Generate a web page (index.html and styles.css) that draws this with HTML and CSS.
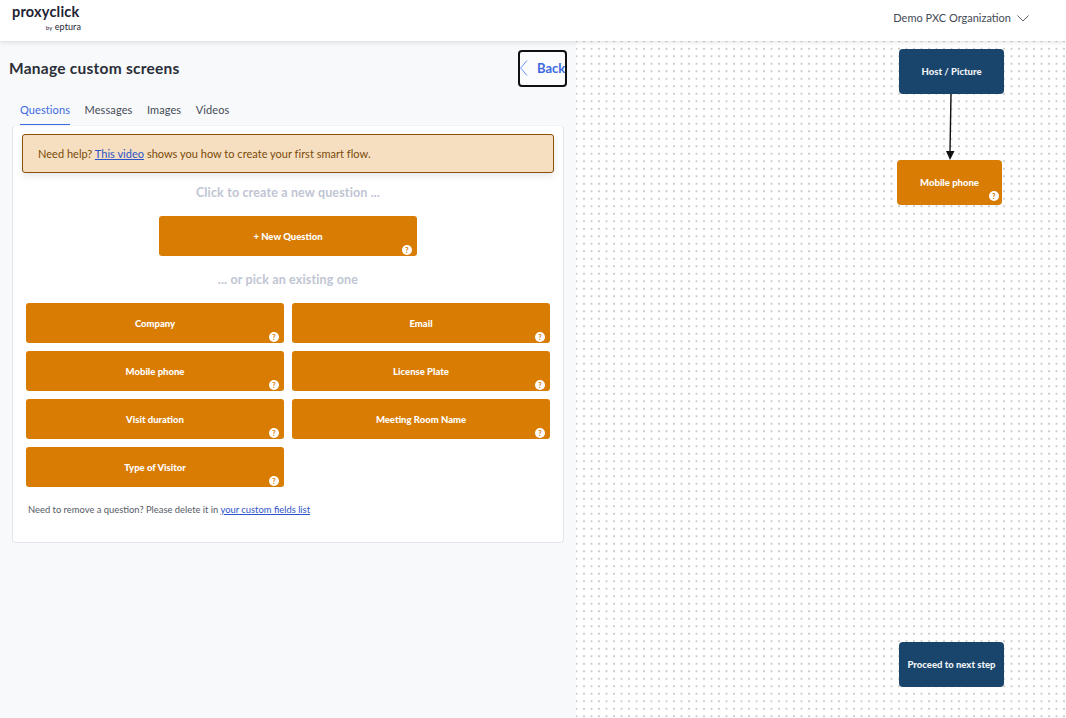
FILE: index.html
```html
<!DOCTYPE html>
<html lang="en">
<head>
<meta charset="utf-8">
<title>Manage custom screens</title>
<link rel="stylesheet" href="styles.css">
</head>
<body>
<header class="topbar">
  <div class="logo">
    <div class="logo-main">proxyclick</div>
    <div class="logo-sub"><span class="logo-by">by</span> eptura</div>
  </div>
  <div class="org">
    <span>Demo PXC Organization</span>
    <svg class="org-chevron" width="12" height="7" viewBox="0 0 12 7"><path d="M.5.5 6 6 11.5.5" fill="none" stroke="#5b616c" stroke-width="1"/></svg>
  </div>
</header>
<main class="layout">
  <section class="panel">
    <div class="panel-head">
      <h1>Manage custom screens</h1>
      <button class="back">
        <svg width="8" height="16" viewBox="0 0 8 16"><path d="M7 .5 .7 8 7 15.500" fill="none" stroke="#6f94f2" stroke-width="1"/></svg>
        <span>Back</span>
      </button>
    </div>
    <nav class="tabs">
      <a class="tab active">Questions</a>
      <a class="tab">Messages</a>
      <a class="tab">Images</a>
      <a class="tab">Videos</a>
    </nav>
    <div class="card">
      <div class="notice">Need help? <a href="#">This video</a> shows you how to create your first smart flow.</div>
      <p class="hint hint-first">Click to create a new question ...</p>
      <div class="new-row">
        <div class="tile new">+ New Question<i class="help">?</i></div>
      </div>
      <p class="hint hint-second">... or pick an existing one</p>
      <div class="grid">
        <div class="tile">Company<i class="help">?</i></div>
        <div class="tile">Email<i class="help">?</i></div>
        <div class="tile">Mobile phone<i class="help">?</i></div>
        <div class="tile">License Plate<i class="help">?</i></div>
        <div class="tile">Visit duration<i class="help">?</i></div>
        <div class="tile">Meeting Room Name<i class="help">?</i></div>
        <div class="tile">Type of Visitor<i class="help">?</i></div>
      </div>
      <p class="remove">Need to remove a question? Please delete it in <a href="#">your custom fields list</a></p>
    </div>
  </section>
  <section class="canvas">
    <svg class="edge" width="12" height="67" viewBox="0 0 12 67"><path d="M7 0 6 58" stroke="#111" stroke-width="1.4" fill="none"/><path d="M2 57h8.500L6 66z" fill="#111"/></svg>
    <div class="node node-host">Host / Picture</div>
    <div class="node node-mobile">Mobile phone<i class="help help-node">?</i></div>
    <div class="node node-next">Proceed to next step</div>
  </section>
</main>
</body>
</html>
```
FILE: styles.css
```css
* { box-sizing: border-box; }
html, body { margin: 0; height: 100%; }
body {
  width: 1066px; height: 718px; overflow: hidden;
  font-family: "Lato", "Liberation Sans", sans-serif;
  color: #2b2f38; background: #fff;
  display: flex; flex-direction: column;
}
.topbar {
  height: 41px; flex: none; background: #fff;
  display: flex; align-items: flex-start; justify-content: space-between;
  box-shadow: 0 1px 5px rgba(40,50,70,.16);
  position: relative; z-index: 2;
}
.logo { margin: 4px 0 0 12px; width: 69px; color: #1d2333; }
.logo-main { font-size: 14.5px; line-height: 16px; font-weight: 700; letter-spacing: .2px; }
.logo-sub { font-size: 9px; line-height: 9px; text-align: right; font-weight: 400; margin-top: 2px; letter-spacing: .1px; }
.logo-by { font-size: 6px; }
.org { display: flex; align-items: center; gap: 6px; margin: 10px 37px 0 0; font-size: 11px; line-height: 15px; color: #444a55; }
.org-chevron { margin-top: 1px; }
.layout { flex: 1; display: flex; min-height: 0; }
.panel { width: 576px; flex: none; background: #f8f9fb; padding: 9px 9px 0 9px; }
.panel-head { display: flex; justify-content: space-between; align-items: center; height: 37px; }
h1 { margin: -2px 0 0; font-size: 15.5px; font-weight: 700; color: #2b2f38; letter-spacing: .25px; }
.back {
  width: 49px; height: 37px; padding: 0 0 2px 0; background: #fbfcfe;
  border: 2px solid #111; border-radius: 4px;
  display: flex; align-items: center; gap: 9px; overflow: hidden;
  font: 700 13px "Lato", sans-serif; color: #3d6ae0; white-space: nowrap;
}
.back svg { flex: none; }
.tabs { display: flex; gap: 14.5px; margin: 15px 0 0 11px; height: 23px; font-size: 11px; letter-spacing: .1px; }
.tab { color: #454b57; line-height: 15px; }
.tab.active { color: #3d6ae0; height: 23px; border-bottom: 1px solid #3d6ae0; }
.card {
  width: 552px; margin: 0 0 0 3px; height: 418px;
  background: #fff; border: 1px solid #e3e6ec; border-top-color: #f1f2f5; border-radius: 4px;
  padding: 8px 9px 0 9px;
}
.notice {
  height: 39px; background: #f5dfc0; border: 1px solid #8a5209; border-radius: 3px;
  color: #7b4a0a; font-size: 11px; line-height: 37px; padding-left: 15px;
  box-shadow: 0 3px 7px rgba(60,60,80,.12); letter-spacing: .02px;
}
.notice a { color: #2f53c9; }
.hint { margin: 0; text-align: center; color: #c0c5d3; font-size: 12.5px; font-weight: 700; line-height: 16px; letter-spacing: .15px; }
.hint-first { margin-top: 12px; }
.hint-second { margin-top: 16px; }
.new-row { display: flex; justify-content: center; margin-top: 15px; }
.tile {
  position: relative; height: 40px; background: #d97c03; border-radius: 3px;
  color: #fff; font-size: 9.5px; font-weight: 900;
  display: flex; align-items: center; justify-content: center;
}
.new { width: 258px; }
.grid { display: grid; grid-template-columns: 258px 258px; gap: 8px; margin: 15px 0 0 4px; }
.help {
  position: absolute; right: 5px; bottom: 1px; width: 10px; height: 10px; border-radius: 50%;
  background: #fff; color: #d97c03; font: 900 7px/10px "Lato", sans-serif; text-align: center;
}
.remove { margin: 16px 0 0 6px; font-size: 9.4px; line-height: 14px; color: #555b66; }
.remove a { color: #2f53c9; }
.canvas {
  flex: 1; position: relative;
  background-color: #fff;
  background-image: radial-gradient(circle at center, #cbcbcb 1px, transparent 1.3px);
  background-size: 7.5px 7.5px;
  background-position: -3.25px -3.5px;
}
.node {
  position: absolute; height: 45px; width: 105px; border-radius: 4px;
  color: #fff; font-size: 9.5px; font-weight: 900;
  display: flex; align-items: center; justify-content: center; text-align: center;
}
.node-host { left: 323px; top: 8px; background: #19446b; color: #eef2f6; }
.node-mobile { left: 321px; top: 119px; background: #d97c03; }
.node-next { left: 323px; top: 601px; background: #19446b; color: #eef2f6; }
.help-node { right: 3px; bottom: 4px; }
.edge { position: absolute; left: 368px; top: 53px; }
```
